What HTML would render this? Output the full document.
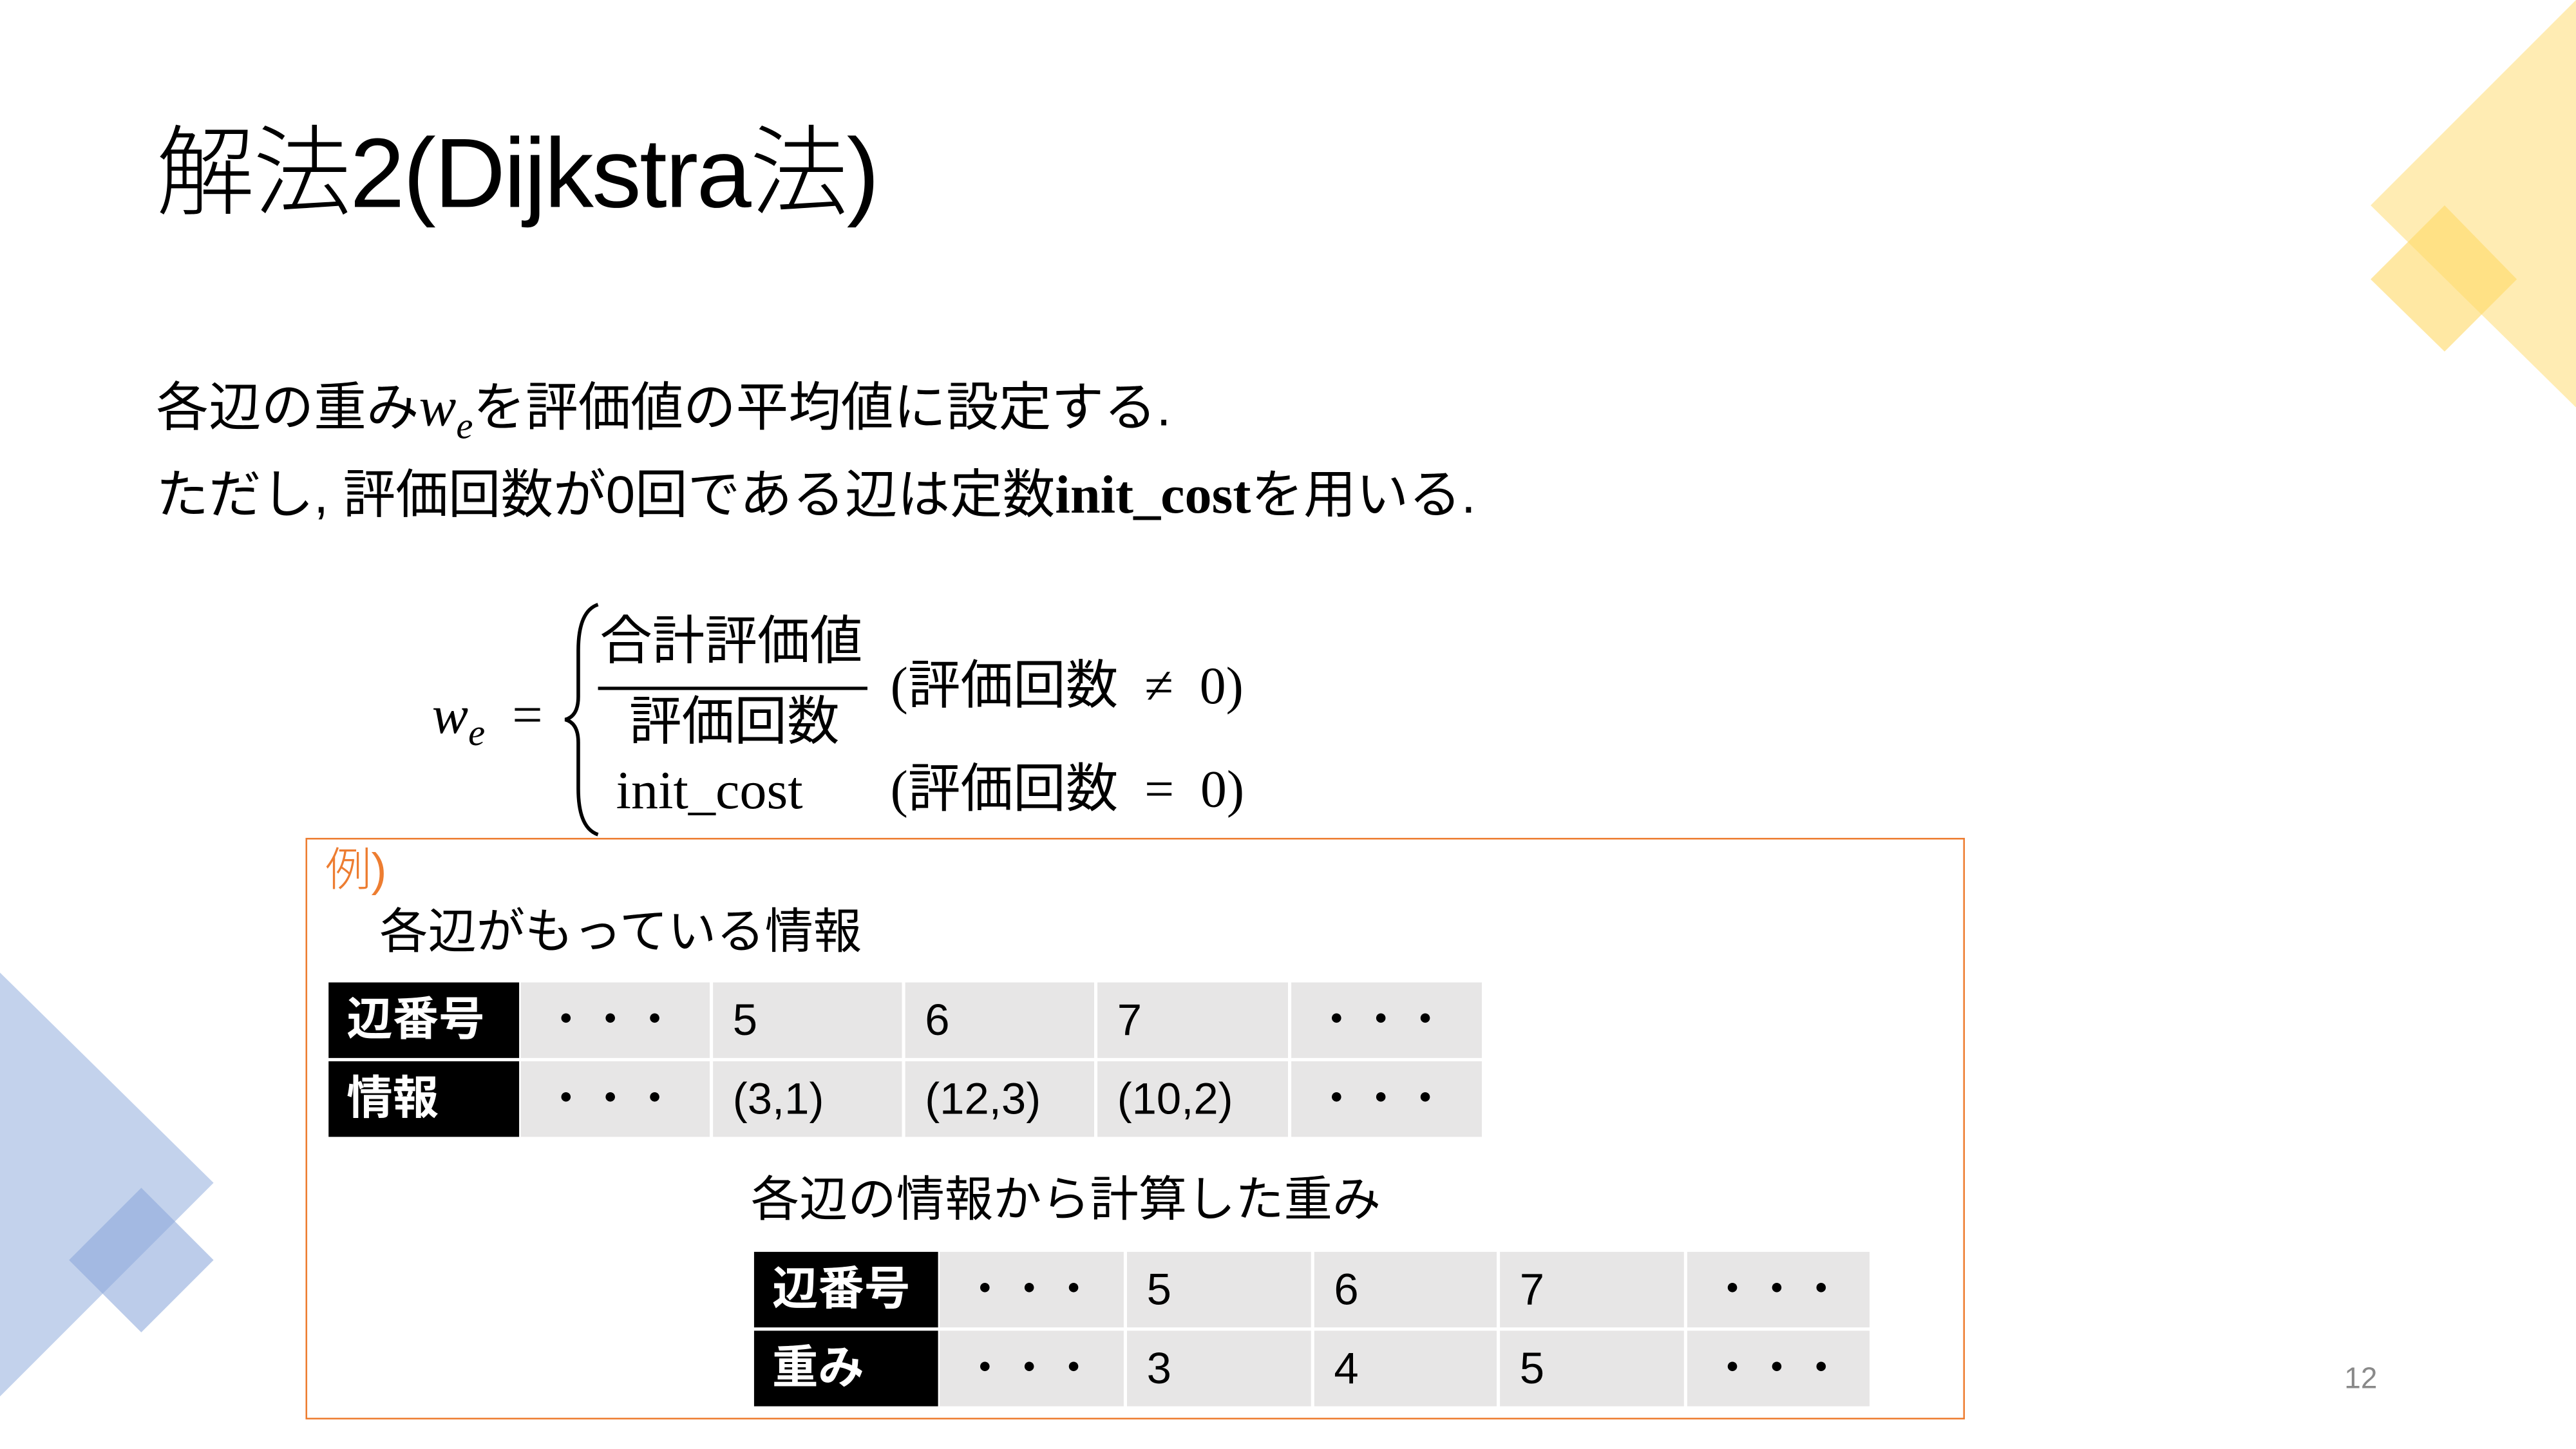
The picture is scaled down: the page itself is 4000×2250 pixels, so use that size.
<!DOCTYPE html>
<html><head><meta charset="utf-8"><style>
html,body{margin:0;padding:0;background:#fff;overflow:hidden}
body{width:4000px;height:2250px;position:relative}
#s{position:absolute;left:0;top:0;width:1568px;height:882px;transform:scale(2.55102);transform-origin:0 0;font-family:"Liberation Sans","Noto Sans CJK JP",sans-serif;color:#000}
.t{position:absolute;white-space:nowrap;line-height:1}
.m{font-family:"Liberation Serif","Noto Sans CJK JP",serif}
.c{position:absolute;background:#e7e6e6;font-size:27px;line-height:46px;padding-left:12px;box-sizing:border-box;height:46px}
.h{background:#000;color:#fff;font-weight:bold;font-size:28px;padding-left:11px}
.d{padding-left:14px}
</style></head><body><div id="s">
<svg width="1568" height="882" style="position:absolute;left:0;top:0">
<polygon points="1443,125 1568,0 1568,248" fill="#ffe699" opacity="0.75"/>
<polygon points="1443,170 1488,125 1532,170 1488,214" fill="#ffd966" opacity="0.6"/>
<polygon points="0,592 130,720 0,850" fill="#b4c7e7" opacity="0.8"/>
<polygon points="42,767 86,723 130,767 86,811" fill="#8faadc" opacity="0.6"/>
</svg>
<div class="t" style="left:95px;top:76px;font-size:60px;font-weight:300;letter-spacing:-1px">解法2(Dijkstra法)</div>
<div class="t" style="left:95px;top:232px;font-size:32px">各辺の重み<span class="m" style="font-style:italic;font-size:34px">w<sub style="font-size:23px">e</sub></span>を評価値の平均値に設定する.</div>
<div class="t" style="left:95px;top:285px;font-size:32px">ただし, 評価回数が0回である辺は定数<span class="m" style="font-size:33px;font-weight:bold">init_cost</span>を用いる.</div>
<div class="t m" style="left:263px;top:420px;font-size:33px"><i>w<sub style="font-size:23px">e</sub></i> &nbsp;=</div>
<svg width="30" height="144" style="position:absolute;left:340px;top:366px"><path d="M24,2 Q12,6 12,30 L12,58 Q12,70 4,72 Q12,74 12,86 L12,114 Q12,138 24,142" fill="none" stroke="#000" stroke-width="2.2"/></svg>
<div class="t m" style="left:365px;top:374px;font-size:32px">合計評価値</div>
<div style="position:absolute;left:364px;top:418px;width:164px;height:2px;background:#000"></div>
<div class="t m" style="left:383px;top:423px;font-size:32px">評価回数</div>
<div class="t m" style="left:542px;top:401px;font-size:32px">(評価回数 &nbsp;≠ &nbsp;0)</div>
<div class="t m" style="left:375px;top:466px;font-size:33px">init_cost</div>
<div class="t m" style="left:542px;top:464px;font-size:32px">(評価回数 &nbsp;= &nbsp;0)</div>
<div style="position:absolute;left:186px;top:510px;width:1008px;height:352px;border:1.5px solid #ed7d31"></div>
<div class="t" style="left:198px;top:516px;font-size:28px;color:#ed7d31;font-weight:300">例)</div>
<div class="t" style="left:231px;top:553px;font-size:29.5px">各辺がもっている情報</div>
<div class="c h" style="left:200px;top:598px;width:116px">辺番号</div>
<div class="c d" style="left:317px;top:598px;width:115px">・・・</div>
<div class="c" style="left:434px;top:598px;width:115px">5</div>
<div class="c" style="left:551px;top:598px;width:115px">6</div>
<div class="c" style="left:668px;top:598px;width:116px">7</div>
<div class="c d" style="left:786px;top:598px;width:116px">・・・</div>
<div class="c h" style="left:200px;top:646px;width:116px">情報</div>
<div class="c d" style="left:317px;top:646px;width:115px">・・・</div>
<div class="c" style="left:434px;top:646px;width:115px">(3,1)</div>
<div class="c" style="left:551px;top:646px;width:115px">(12,3)</div>
<div class="c" style="left:668px;top:646px;width:116px">(10,2)</div>
<div class="c d" style="left:786px;top:646px;width:116px">・・・</div>
<div class="t" style="left:457px;top:716px;font-size:29.5px">各辺の情報から計算した重み</div>
<div class="c h" style="left:459px;top:762px;width:112px">辺番号</div>
<div class="c d" style="left:572px;top:762px;width:112px">・・・</div>
<div class="c" style="left:686px;top:762px;width:112px">5</div>
<div class="c" style="left:800px;top:762px;width:111px">6</div>
<div class="c" style="left:913px;top:762px;width:112px">7</div>
<div class="c d" style="left:1027px;top:762px;width:111px">・・・</div>
<div class="c h" style="left:459px;top:810px;width:112px">重み</div>
<div class="c d" style="left:572px;top:810px;width:112px">・・・</div>
<div class="c" style="left:686px;top:810px;width:112px">3</div>
<div class="c" style="left:800px;top:810px;width:111px">4</div>
<div class="c" style="left:913px;top:810px;width:112px">5</div>
<div class="c d" style="left:1027px;top:810px;width:111px">・・・</div>
<div class="t" style="left:1427px;top:830px;font-size:18px;color:#898989">12</div>
</div></body></html>
